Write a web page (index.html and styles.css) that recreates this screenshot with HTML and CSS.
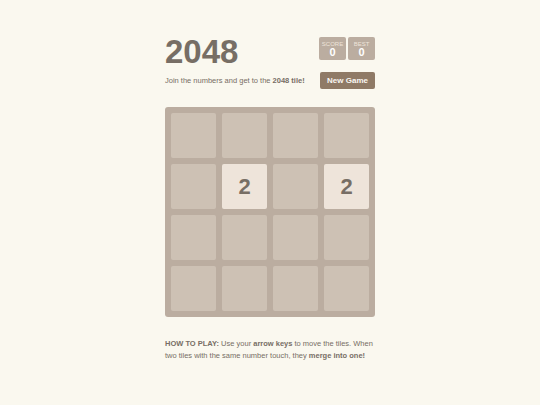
FILE: index.html
```html
<!DOCTYPE html>
<html>
<head>
<meta charset="utf-8">
<link rel="stylesheet" href="styles.css">
</head>
<body>
<div class="container">
  <div class="heading">
    <h1 class="title">2048</h1>
    <div class="scores">
      <div class="score-box"><span class="label">Score</span><span class="value">0</span></div>
      <div class="score-box"><span class="label">Best</span><span class="value">0</span></div>
    </div>
  </div>
  <div class="above-game">
    <p class="intro">Join the numbers and get to the <strong>2048 tile!</strong></p>
    <a class="restart">New Game</a>
  </div>
  <div class="grid">
    <div class="cell"></div><div class="cell"></div><div class="cell"></div><div class="cell"></div>
    <div class="cell"></div><div class="cell tile-2">2</div><div class="cell"></div><div class="cell tile-2">2</div>
    <div class="cell"></div><div class="cell"></div><div class="cell"></div><div class="cell"></div>
    <div class="cell"></div><div class="cell"></div><div class="cell"></div><div class="cell"></div>
  </div>
  <p class="explanation"><strong>HOW TO PLAY:</strong> Use your <strong>arrow keys</strong> to move the tiles. When two tiles with the same number touch, they <strong>merge into one!</strong></p>
</div>
</body>
</html>
```
FILE: styles.css
```css
html, body {
  margin: 0;
  padding: 0;
  background: #faf8ef;
  color: #776e65;
  font-family: "Liberation Sans", Arial, sans-serif;
  font-size: 7.5px;
}
.container {
  width: 210px;
  margin: 0 auto;
  padding-top: 36px;
}
.heading {
  display: flex;
  justify-content: space-between;
  align-items: flex-start;
}
.title {
  margin: 0;
  font-size: 33px;
  line-height: 32px;
  font-weight: bold;
}
.scores {
  display: flex;
  gap: 2px;
  margin-top: 1px;
}
.score-box {
  width: 27px;
  height: 23px;
  background: #bbada0;
  border-radius: 2px;
  display: flex;
  flex-direction: column;
  align-items: center;
  color: #fff;
}
.score-box .label {
  font-size: 6px;
  text-transform: uppercase;
  color: #eee4da;
  margin-top: 4px;
  line-height: 6px;
}
.score-box .value {
  font-size: 11px;
  font-weight: bold;
  line-height: 11px;
}
.above-game {
  display: flex;
  justify-content: space-between;
  align-items: center;
  margin-top: 4px;
}
.intro {
  margin: 0;
  line-height: 17px;
}
.restart {
  display: block;
  width: 55px;
  height: 17px;
  line-height: 17px;
  text-align: center;
  background: #8f7a66;
  color: #f9f6f2;
  border-radius: 2px;
  font-weight: bold;
  font-size: 8px;
}
.grid {
  margin-top: 18px;
  background: #bbada0;
  border-radius: 3px;
  padding: 6px;
  display: grid;
  grid-template-columns: repeat(4, 45px);
  grid-auto-rows: 45px;
  gap: 6px;
}
.cell {
  background: #cdc1b4;
  border-radius: 2px;
  display: flex;
  align-items: center;
  justify-content: center;
  font-size: 22px;
  font-weight: bold;
}
.tile-2 {
  background: #eee4da;
  color: #776e65;
}
.explanation {
  margin: 21px 0 0;
  line-height: 12px;
}
```
